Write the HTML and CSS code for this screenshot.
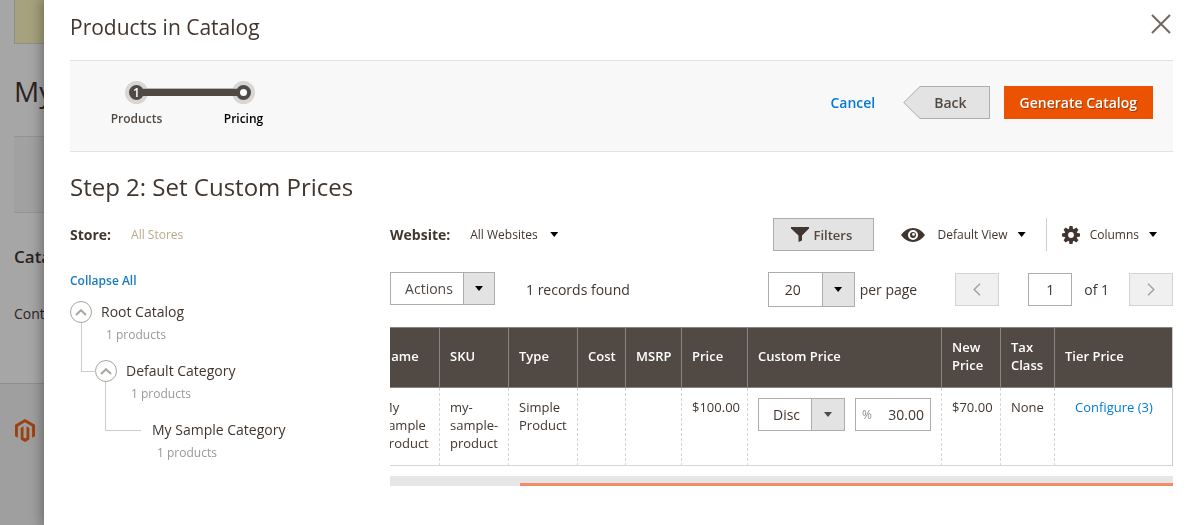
FILE: index.html
```html
<!DOCTYPE html>
<html lang="en">
<head>
<meta charset="utf-8">
<meta name="viewport" content="width=device-width, initial-scale=1">
<title>Products in Catalog</title>
<link rel="stylesheet" href="styles.css">
</head>
<body>
<div class="page">
  <div class="page-notice"></div>
  <div class="page-title">My</div>
  <div class="page-actions"></div>
  <div class="page-section">Cata</div>
  <div class="page-text">Cont</div>
  <div class="page-footer">
    <svg class="logo" viewBox="0 0 20 23" width="20" height="23" aria-hidden="true">
      <path d="M10 0 20 5.700V17.200L17.100 18.800V7.400L10 3.300 2.900 7.400V18.800L0 17.200V5.700Z"/>
      <path d="M5.700 8.900 8.500 7.300V18.500L10 19.400 11.500 18.500V7.300L14.300 8.900V20.400L10 23 5.700 20.400Z"/>
    </svg>
  </div>
</div>

<main class="modal" role="dialog" aria-labelledby="modal-title">
  <header class="modal-header">
    <h1 class="modal-title" id="modal-title">Products in Catalog</h1>
    <button class="close" type="button" aria-label="Close">
      <svg viewBox="0 0 20 20" width="20" height="20"><path d="M1 1 19 19M19 1 1 19"/></svg>
    </button>
  </header>

  <div class="wizard">
    <ol class="steps">
      <li class="step step-done"><span class="dot">1</span><a class="step-label" href="#products">Products</a></li>
      <li class="step step-current"><span class="dot"></span><span class="step-label">Pricing</span></li>
    </ol>
    <div class="wizard-buttons">
      <button class="btn-cancel" type="button">Cancel</button>
      <button class="btn-back" type="button">
        <svg class="back-shape" viewBox="0 0 17 33" width="17" height="33" aria-hidden="true"><path class="back-fill" d="M17 0V33L.7 16.500Z"/><path class="back-line" d="M17 .5 .7 16.500 17 32.500"/></svg>
        <span class="back-text">Back</span>
      </button>
      <button class="btn-primary" type="button">Generate Catalog</button>
    </div>
  </div>

  <h2 class="step-title">Step 2: Set Custom Prices</h2>

  <div class="content">
    <aside class="sidebar">
      <div class="store"><span class="field-label">Store:</span><span class="store-value">All Stores</span></div>
      <button class="collapse" type="button">Collapse All</button>
      <ul class="tree">
        <li class="node">
          <div class="node-row">
            <button class="toggle" type="button" aria-label="Collapse Root Catalog"><svg viewBox="0 0 12 7" width="12" height="7"><path d="M1 6 6 1.200 11 6"/></svg></button>
            <div class="node-text"><span class="node-name">Root Catalog</span><span class="node-count">1 products</span></div>
          </div>
          <ul class="subtree">
            <li class="node">
              <div class="node-row">
                <button class="toggle" type="button" aria-label="Collapse Default Category"><svg viewBox="0 0 12 7" width="12" height="7"><path d="M1 6 6 1.200 11 6"/></svg></button>
                <div class="node-text"><span class="node-name">Default Category</span><span class="node-count">1 products</span></div>
              </div>
              <ul class="subtree">
                <li class="node">
                  <div class="node-row node-leaf">
                    <div class="node-text"><span class="node-name">My Sample Category</span><span class="node-count">1 products</span></div>
                  </div>
                </li>
              </ul>
            </li>
          </ul>
        </li>
      </ul>
    </aside>

    <section class="grid">
      <div class="toolbar toolbar-top">
        <label class="field-label" for="website">Website:</label>
        <div class="select select-plain">
          <select id="website"><option>All Websites</option></select>
          <span class="arrow-box"><span class="arrow"></span></span>
        </div>
        <div class="toolbar-right">
          <button class="btn-filters" type="button">
            <svg viewBox="0 0 18 15" width="18" height="15" aria-hidden="true"><path d="M0 0H18V1.500L11 8.500V13.500L7.500 15V8.500L0 1.500Z"/></svg>
            <span>Filters</span>
          </button>
          <button class="btn-menu btn-view" type="button">
            <svg viewBox="0 0 24 14" width="24" height="14" aria-hidden="true"><path fill-rule="evenodd" d="M0 7Q5 0 12 0T24 7Q19 14 12 14T0 7ZM12 2A5 5 0 1 0 12 12A5 5 0 1 0 12 2ZM12 4A3 3 0 1 1 12 10A3 3 0 1 1 12 4ZM12.500 5A1.400 1.400 0 1 0 12.500 7.800A1.400 1.400 0 1 0 12.500 5Z"/></svg>
            <span>Default View</span><span class="arrow"></span>
          </button>
          <button class="btn-menu btn-columns" type="button">
            <svg viewBox="-9 -9 18 18" width="18" height="18" aria-hidden="true"><g><path fill-rule="evenodd" d="M-6.500 0A6.500 6.500 0 1 0 6.500 0A6.500 6.500 0 1 0-6.500 0ZM-2.900 0A2.900 2.900 0 1 1 2.900 0A2.900 2.900 0 1 1-2.900 0Z"/><path id="tooth" d="M-2.200-5.500-1.500-9H1.500L2.200-5.500Z"/><use href="#tooth" transform="rotate(45)"/><use href="#tooth" transform="rotate(90)"/><use href="#tooth" transform="rotate(135)"/><use href="#tooth" transform="rotate(180)"/><use href="#tooth" transform="rotate(225)"/><use href="#tooth" transform="rotate(270)"/><use href="#tooth" transform="rotate(315)"/></g></svg>
            <span>Columns</span><span class="arrow"></span>
          </button>
        </div>
      </div>

      <div class="toolbar toolbar-pager">
        <button class="btn-actions" type="button"><span class="actions-text">Actions</span><span class="actions-arrow"><span class="arrow"></span></span></button>
        <span class="records">1 records found</span>
        <div class="pager">
          <div class="select select-size">
            <select id="page-size"><option>20</option></select>
            <span class="arrow-box"><span class="arrow"></span></span>
          </div>
          <label class="size-label" for="page-size">per page</label>
          <button class="btn-page" type="button" aria-label="Previous page" disabled><svg viewBox="0 0 8 13" width="8" height="13"><path d="M7 .7 1.200 6.500 7 12.300"/></svg></button>
          <input class="page-input" id="page-number" type="text" value="1">
          <label class="page-total" for="page-number">of 1</label>
          <button class="btn-page" type="button" aria-label="Next page" disabled><svg viewBox="0 0 8 13" width="8" height="13"><path d="M1 .7 6.800 6.500 1 12.300"/></svg></button>
        </div>
      </div>

      <div class="table-wrap">
        <table class="table">
          <colgroup><col class="c-name"><col class="c-sku"><col class="c-type"><col class="c-cost"><col class="c-msrp"><col class="c-price"><col class="c-custom"><col class="c-new"><col class="c-tax"><col class="c-tier"></colgroup>
          <thead>
            <tr><th>Name</th><th>SKU</th><th>Type</th><th>Cost</th><th>MSRP</th><th>Price</th><th>Custom Price</th><th>New Price</th><th>Tax Class</th><th>Tier Price</th></tr>
          </thead>
          <tbody>
            <tr>
              <td>My Sample Product</td><td>my-sample-product</td><td>Simple Product</td><td></td><td></td><td>$100.00</td>
              <td>
                <div class="custom-price">
                  <div class="select select-kind">
                    <select aria-label="Custom price type"><option>Disc</option></select>
                    <span class="arrow-box"><span class="arrow"></span></span>
                  </div>
                  <div class="amount"><label for="amount">%</label><input id="amount" type="text" value="30.00"></div>
                </div>
              </td>
              <td>$70.00</td><td>None</td><td class="tier"><a href="#tier">Configure (3)</a></td>
            </tr>
          </tbody>
        </table>
      </div>
      <div class="scrollbar"><div class="scrollbar-thumb"></div></div>
    </section>
  </div>
</main>
</body>
</html>
```
FILE: styles.css
```css
* { box-sizing: border-box; }

body {
  margin: 0;
  min-height: 100vh;
  overflow: hidden;
  background: #a6a6a6;
  color: #41362f;
  font: 14px/18px "Open Sans", "Noto Sans", sans-serif;
}

button, input, select { font: inherit; color: inherit; margin: 0; }
button { padding: 0; border: 0; background: none; cursor: pointer; white-space: nowrap; }
select { appearance: none; border: 0; border-radius: 0; outline: 0; background: transparent; }
a { color: #007bdb; text-decoration: none; }
ul, ol { margin: 0; padding: 0; list-style: none; }

/* Page behind the dialog */
.page { display: flex; flex-direction: column; min-height: 100vh; color: #2a231f; }
.page-notice { height: 44px; margin-left: 14px; background: #a6a27d; border: 1px solid #8e8e8e; border-top: 0; }
.page-title { padding: 29px 0 0 14px; font-size: 28px; line-height: 36px; }
.page-actions { height: 77px; margin: 27px 0 0 14px; background: #a1a1a1; border: 1px solid #949494; border-width: 1px 0; }
.page-section { padding: 34px 0 0 14px; font-size: 17px; font-weight: 600; line-height: 20px; }
.page-text { padding: 38px 0 0 14px; }
.page-footer { flex: 1; margin-top: 60px; padding: 35px 0 0 15px; background: #9f9f9f; border-top: 1px solid #8e8e8e; }
.logo { display: block; fill: #9e4010; }

/* Dialog */
.modal {
  position: fixed;
  inset: 0 0 0 44px;
  padding: 0 17px 0 26px;
  background: #fff;
  box-shadow: 0 0 12px 2px rgba(0, 0, 0, 0.35);
}
.modal-header { display: flex; justify-content: space-between; align-items: flex-start; height: 60px; }
.modal-title { margin: 0; padding-top: 12px; font-size: 21px; font-weight: 400; line-height: 30px; }
.close { display: flex; margin-top: 14px; margin-right: 2px; }
.close svg { fill: none; stroke: #736963; stroke-width: 2; }

.wizard {
  display: flex;
  justify-content: space-between;
  align-items: flex-start;
  height: 92px;
  padding: 20px 20px 0 13px;
  background: #f8f8f8;
  border: 1px solid #e3e3e3;
  border-width: 1px 0;
}
.steps { display: flex; }
.step { position: relative; display: flex; flex-direction: column; align-items: center; width: 107px; font-size: 12px; font-weight: 600; }
.dot {
  display: flex;
  align-items: center;
  justify-content: center;
  width: 23px;
  height: 23px;
  border: 4px solid #d6d6d6;
  border-radius: 50%;
  background: #514943;
  color: #fff;
  line-height: 15px;
}
.step-current .dot::after { content: ""; width: 7px; height: 7px; border-radius: 50%; background: #fff; }
.step-done::after {
  content: "";
  position: absolute;
  top: 7px;
  left: 60px;
  z-index: 1;
  width: 94px;
  height: 7px;
  background: #514943;
  border-top: 1px solid #b9b6b3;
}
.step-label { margin-top: 6px; color: #514943; }
.step-current .step-label { color: #000; }

.wizard-buttons { display: flex; align-items: center; padding-top: 5px; font-weight: 600; }
.wizard-buttons button { height: 33px; }
.btn-cancel { color: #007bdb; margin-right: 28px; }
.btn-back { display: flex; margin-right: 14px; color: #514943; }
.back-text { display: flex; align-items: center; height: 33px; padding: 0 22px 0 14px; background: #e3e3e3; border: 1px solid #adadad; border-left: 0; }
.back-fill { fill: #e3e3e3; }
.back-line { fill: none; stroke: #adadad; }
.btn-primary { padding: 0 16px; background: #eb5202; color: #fff; text-shadow: 1px 1px 0 rgba(0, 0, 0, 0.3); }

.step-title { margin: 17px 0 13px; font-size: 24px; font-weight: 400; line-height: 36px; }

.content { display: flex; align-items: flex-start; }
.sidebar { flex: 0 0 320px; }
.grid { flex: 1; min-width: 0; }
.field-label { font-weight: 700; }

/* Category tree */
.store { display: flex; align-items: center; gap: 20px; height: 33px; }
.store-value { color: #bca98c; font-size: 12px; }
.collapse { display: block; margin-top: 21px; height: 18px; color: #1979c3; font-size: 12px; font-weight: 600; }
.tree { padding-top: 11px; }
.node { position: relative; }
.node-row { display: flex; gap: 9px; height: 59px; }
.toggle {
  display: flex;
  align-items: center;
  justify-content: center;
  flex: none;
  width: 22px;
  height: 22px;
  border: 1px solid #aaa6a0;
  border-radius: 50%;
  background: #fff;
}
.toggle svg { fill: none; stroke: #aaa6a0; stroke-width: 2; }
.node-text { display: flex; flex-direction: column; gap: 5px; padding-top: 2px; }
.node-count { padding-left: 5px; color: #999; font-size: 12px; }
.subtree { padding-left: 25px; }
.subtree > .node::before {
  content: "";
  position: absolute;
  top: -37px;
  left: -14px;
  width: 14px;
  height: 48px;
  border: 1px solid #ccc;
  border-width: 0 0 1px 1px;
}
.subtree .subtree > .node::before { left: -15px; width: 35px; }
.node-leaf { padding-left: 32px; }

/* Toolbars */
.toolbar { display: flex; align-items: center; }
.arrow { width: 8px; height: 5px; background: #000; clip-path: polygon(0 0, 100% 0, 50% 100%); }
.select { position: relative; display: flex; }
.select select { width: 100%; height: 100%; }
.arrow-box {
  position: absolute;
  inset: 0 0 0 auto;
  display: flex;
  align-items: center;
  justify-content: center;
  width: 32px;
  pointer-events: none;
}
.select-plain { width: 104px; height: 33px; margin-left: 20px; font-size: 12px; }
.select-plain .arrow-box { width: 40px; }
.toolbar-right, .pager { display: flex; align-items: center; margin-left: auto; }
.toolbar-right svg { fill: #41362f; }
.btn-filters {
  display: flex;
  align-items: center;
  gap: 4px;
  width: 101px;
  height: 33px;
  padding: 0 17px;
  background: #e3e3e3;
  border: 1px solid #adadad;
  color: #514943;
  font-size: 13px;
  font-weight: 600;
}
.btn-menu { display: flex; align-items: center; height: 33px; gap: 10px; font-size: 12px; }
.btn-view { padding: 0 20px 0 27px; border-right: 1px solid #ccc; }
.btn-view svg { margin-right: 2px; }
.btn-columns { padding: 0 16px 0 15px; }

.toolbar-pager { height: 35px; margin-top: 21px; }
.btn-actions { display: flex; align-self: flex-start; width: 105px; height: 33px; border: 1px solid #adadad; color: #514943; }
.actions-text { flex: 1; align-self: center; padding-left: 4px; }
.actions-arrow { display: flex; align-items: center; justify-content: center; align-self: stretch; width: 31px; background: #e3e3e3; border-left: 1px solid #adadad; }
.records { margin-left: 31px; }
.select-size, .select-kind { border: 1px solid #adadad; }
.select-size .arrow-box, .select-kind .arrow-box { background: #e3e3e3; border-left: 1px solid #adadad; }
.select-size { width: 87px; height: 35px; }
.select-size select { padding: 0 0 0 16px; }
.size-label { margin-left: 5px; margin-right: 38px; }
.btn-page { display: flex; align-items: center; justify-content: center; width: 44px; height: 33px; background: #f0f0f0; border: 1px solid #d3d3d3; }
.btn-page svg { fill: none; stroke: #a3a3a3; stroke-width: 1.5; }
.page-input { width: 44px; height: 33px; margin-left: 29px; padding: 0; border: 1px solid #adadad; border-radius: 0; text-align: center; }
.page-total { margin: 0 20px 0 12px; }

/* Data grid */
.table-wrap { display: flex; justify-content: flex-end; margin-top: 20px; overflow: hidden; }
.table { flex: none; width: calc(100% + 19px); table-layout: fixed; border-collapse: separate; border-spacing: 0; border-right: 1px solid #ccc; font-size: 13px; }
.c-name, .c-sku, .c-type { width: 69px; }
.c-cost { width: 48px; }
.c-msrp { width: 56px; }
.c-price { width: 66px; }
.c-custom { width: 194px; }
.c-new { width: 59px; }
.c-tax { width: 54px; }
th { height: 61px; padding: 0 9px 4px 10px; background: #514943; border: 1px solid #8a837f; border-left: 0; color: #fff; font-weight: 600; text-align: left; vertical-align: middle; }
th:last-child { border-right: 0; }
td { height: 78px; padding: 10px 0 10px 10px; border-right: 1px dashed #d6d6d6; border-bottom: 1px solid #d6d6d6; vertical-align: top; }
td:last-child { border-right: 0; }
.tier { padding-left: 20px; }
.custom-price { display: flex; gap: 10px; }
.select-kind { width: 87px; height: 33px; font-size: 14px; }
.select-kind select { padding: 0 0 0 14px; }
.select-kind .arrow-box { width: 33px; }
.select-kind .arrow { background: #514943; }
.amount { display: flex; align-items: center; width: 76px; height: 33px; padding: 0 6px; border: 1px solid #adadad; }
.amount label { color: #8f8f8f; font-size: 12px; }
.amount input { flex: 1; width: 0; padding: 0; border: 0; outline: 0; font-size: 14px; text-align: right; }

.scrollbar { display: flex; align-items: flex-end; justify-content: flex-end; height: 10px; margin-top: 10px; background: #e6e6e6; }
.scrollbar-thumb { width: 83.4%; height: 3px; background: #f08c66; }
```
